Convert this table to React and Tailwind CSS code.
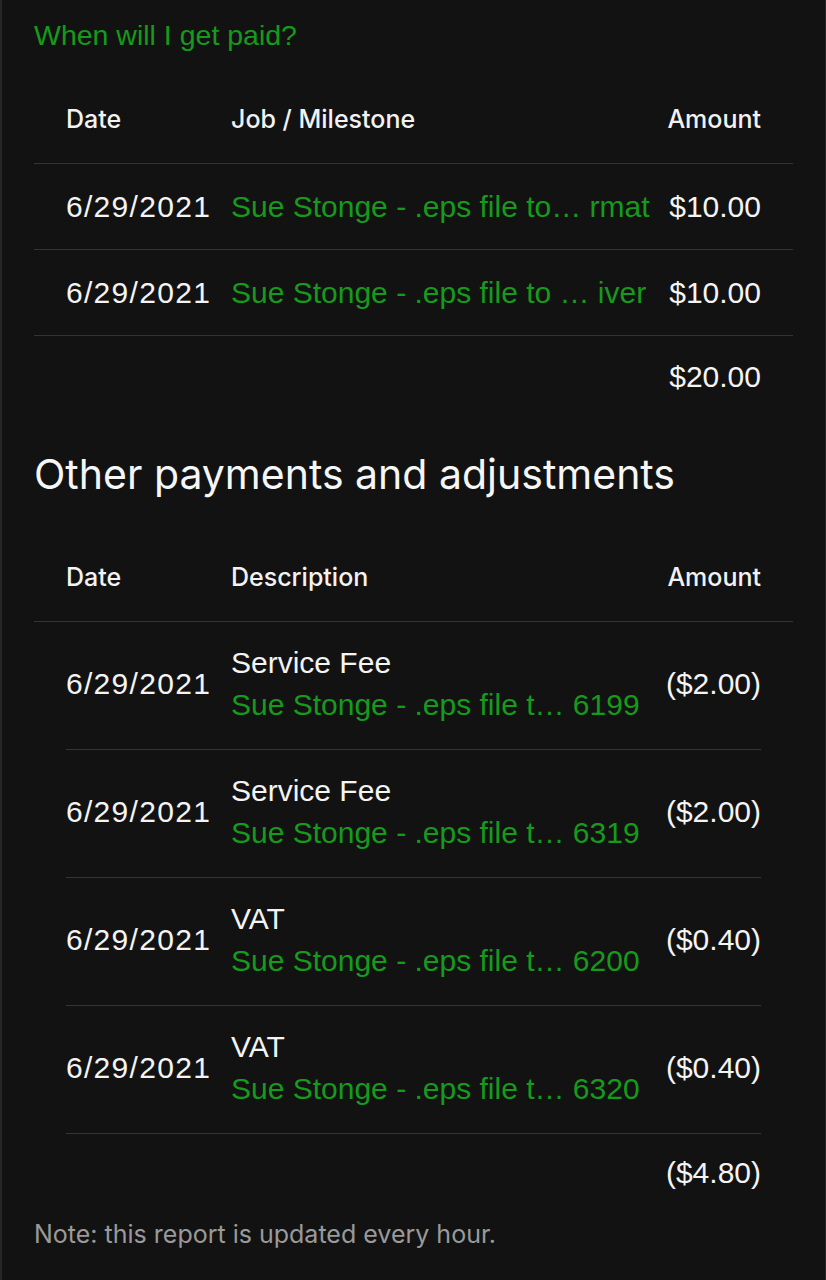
import React from "react";

const GREEN = "text-[#169a1c]";

function Header({ mid }) {
  return (
    <div className="flex h-[88px] items-center border-b border-[#343434] px-[32px] text-[25px] font-medium text-[#f2f2f2] [font-family:Inter,'Liberation_Sans',sans-serif]">
      <div className="w-[165px] shrink-0">Date</div>
      <div className="flex-1">{mid}</div>
      <div>Amount</div>
    </div>
  );
}

function Row1({ date, job, amount }) {
  return (
    <div className="flex h-[86px] items-center border-b border-[#333333] px-[32px] text-[30px]">
      <div className="w-[165px] shrink-0 text-[#f4f4f4] tracking-[1.3px]">{date}</div>
      <div className={`flex-1 whitespace-nowrap ${GREEN}`}>{job}</div>
      <div className="text-[#f4f4f4]">{amount}</div>
    </div>
  );
}

function Row2({ date, label, job, amount }) {
  return (
    <div className="mx-[32px] flex h-[128px] items-center border-b border-[#353535] pb-[4px] text-[30px]">
      <div className="w-[165px] shrink-0 text-[#f4f4f4] tracking-[1.3px]">{date}</div>
      <div className="flex flex-1 flex-col leading-[42px]">
        <div className="text-[#f4f4f4]">{label}</div>
        <div className={`whitespace-nowrap ${GREEN}`}>{job}</div>
      </div>
      <div className="text-[#f4f4f4]">{amount}</div>
    </div>
  );
}

export default function App() {
  return (
    <div className="min-h-[1280px] w-full border-l-2 border-r border-[#262626] bg-[#121212] [font-family:'Liberation_Sans',Arial,sans-serif]">
      <div className="pl-[32px] pr-[32px] pt-[20px]">
        <div className={`h-[30px] text-[28.5px] leading-[30px] ${GREEN}`}>When will I get paid?</div>
        <div className="mt-[26px]">
          <Header mid="Job / Milestone" />
          <Row1 date="6/29/2021" job="Sue Stonge - .eps file to… rmat" amount="$10.00" />
          <Row1 date="6/29/2021" job="Sue Stonge - .eps file to …  iver" amount="$10.00" />
          <div className="flex h-[80px] items-center justify-end px-[32px] text-[30px] text-[#f4f4f4]">$20.00</div>
        </div>
        <h2 className="mt-[34px] text-[41px] leading-[48px] text-[#f6f6f6] [font-family:Inter,'Liberation_Sans',sans-serif]">Other payments and adjustments</h2>
        <div className="mt-[36px]">
          <Header mid="Description" />
          <Row2 date="6/29/2021" label="Service Fee" job="Sue Stonge - .eps file t…  6199" amount="($2.00)" />
          <Row2 date="6/29/2021" label="Service Fee" job="Sue Stonge - .eps file t…  6319" amount="($2.00)" />
          <Row2 date="6/29/2021" label="VAT" job="Sue Stonge - .eps file t… 6200" amount="($0.40)" />
          <Row2 date="6/29/2021" label="VAT" job="Sue Stonge - .eps file t… 6320" amount="($0.40)" />
          <div className="flex h-[80px] items-center justify-end px-[32px] pb-[4px] text-[30px] text-[#f4f4f4]">($4.80)</div>
        </div>
        <div className="mt-[6px] text-[25px] leading-[28px] text-[#9a9a9a] [font-family:Inter,'Liberation_Sans',sans-serif]">Note: this report is updated every hour.</div>
      </div>
    </div>
  );
}
